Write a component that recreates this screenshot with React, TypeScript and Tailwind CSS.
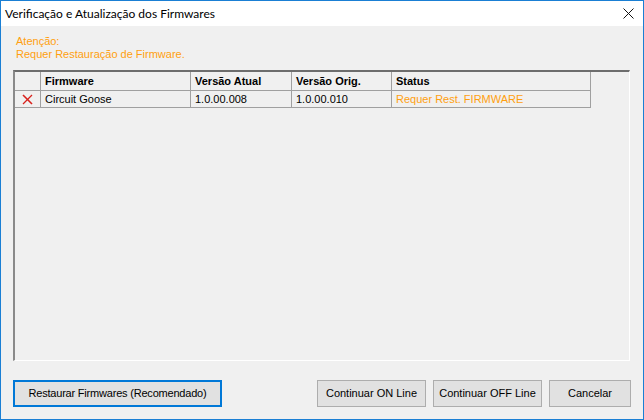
const rows = [
  { firmware: "Circuit Goose", atual: "1.0.00.008", orig: "1.0.00.010", status: "Requer Rest. FIRMWARE" },
];

function RedX() {
  return (
    <svg width="11" height="11" viewBox="0 0 11 11">
      <path d="M1 1 L10 10" stroke="#d8211c" strokeWidth="1.6" />
      <path d="M10 1 L1 10" stroke="#d8211c" strokeWidth="1.2" />
    </svg>
  );
}

export default function App() {
  const cell = "border-r border-b border-[#a0a0a0] pl-[4px] flex items-center";

  return (
    <div
      className="w-[644px] h-[420px] border border-[#1a7fd4] bg-[#f0f0f0] flex flex-col text-[11px] text-black"
      style={{ fontFamily: '"Liberation Sans", Arial, sans-serif' }}
    >
      <div className="h-[25px] bg-white flex items-center justify-between pl-[4px] pr-[9px] shrink-0">
        <span className="text-[12px]" style={{ fontFamily: 'Lato, "Noto Sans", sans-serif' }}>
          Verificação e Atualização dos Firmwares
        </span>
        <svg width="11" height="11" viewBox="0 0 11 11">
          <path d="M0.5 0.5 L10.5 10.5 M10.5 0.5 L0.5 10.5" stroke="#111" strokeWidth="1" />
        </svg>
      </div>

      <div className="flex-1 flex flex-col px-[12px] pt-[9px] pb-[12px]">
        <div className="pl-[3px] text-[#ff9f0f] leading-[13px]">
          <div>Atenção:</div>
          <div>Requer Restauração de Firmware.</div>
        </div>

        <div className="mt-[9px] h-[291px] w-[617px] border-t-2 border-l-2 border-t-[#6d6d6d] border-l-[#8a8a8a] border-r border-b border-r-white border-b-white bg-[#f0f0f0]">
          <div className="flex h-[19px] font-bold">
            <div className={`${cell} w-[26px]`} />
            <div className={`${cell} w-[150px]`}>Firmware</div>
            <div className={`${cell} w-[101px]`}>Versão Atual</div>
            <div className={`${cell} w-[100px]`}>Versão Orig.</div>
            <div className={`${cell} w-[199px]`}>Status</div>
          </div>
          {rows.map((r, i) => (
            <div key={i} className="flex h-[17px]">
              <div className={`${cell} w-[26px] justify-center !pl-0`}>
                <RedX />
              </div>
              <div className={`${cell} w-[150px]`}>{r.firmware}</div>
              <div className={`${cell} w-[101px]`}>{r.atual}</div>
              <div className={`${cell} w-[100px]`}>{r.orig}</div>
              <div className={`${cell} w-[199px] text-[#ff9f0f]`}>{r.status}</div>
            </div>
          ))}
        </div>

        <div className="mt-[19px] flex items-center">
          <button className="w-[209px] h-[27px] border-2 border-[#0078d7] bg-[#e1e1e1] tracking-[-0.2px]">
            Restaurar Firmwares (Recomendado)
          </button>
          <div className="flex-1" />
          <button className="w-[109px] h-[27px] border border-[#adadad] bg-[#e1e1e1]">Continuar ON Line</button>
          <button className="ml-[7px] w-[109px] h-[27px] border border-[#adadad] bg-[#e1e1e1]">Continuar OFF Line</button>
          <button className="ml-[7px] w-[82px] h-[27px] border border-[#adadad] bg-[#e1e1e1]">Cancelar</button>
        </div>
      </div>
    </div>
  );
}
